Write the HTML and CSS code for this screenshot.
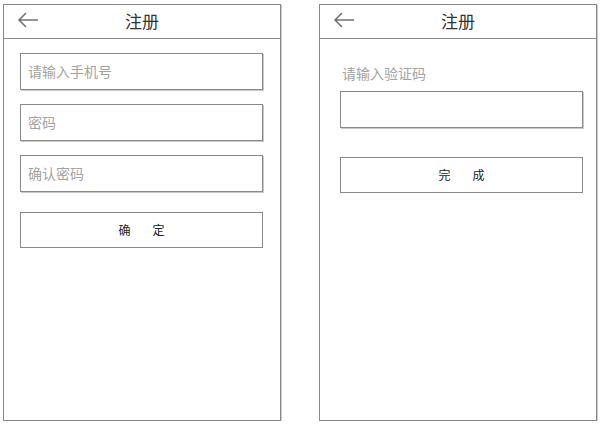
FILE: index.html
```html
<!DOCTYPE html>
<html lang="zh">
<head>
<meta charset="utf-8">
<title>注册</title>
<link rel="stylesheet" href="styles.css">
</head>
<body>
<div class="page">
  <section class="panel">
    <header class="bar">
      <svg class="back" width="22" height="16" viewBox="0 0 22 16"><path d="M21 8H2M9 1L2 8l7 7" fill="none" stroke="#707070" stroke-width="1.5"/></svg>
      <h1 class="title">注册</h1>
    </header>
    <div class="form">
      <div class="field">请输入手机号</div>
      <div class="field">密码</div>
      <div class="field">确认密码</div>
      <div class="btn"><span>确</span><span>定</span></div>
    </div>
  </section>
  <section class="panel">
    <header class="bar">
      <svg class="back" width="22" height="16" viewBox="0 0 22 16"><path d="M21 8H2M9 1L2 8l7 7" fill="none" stroke="#707070" stroke-width="1.5"/></svg>
      <h1 class="title">注册</h1>
    </header>
    <div class="form form-code">
      <div class="label">请输入验证码</div>
      <div class="field field-code"></div>
      <div class="btn btn-done"><span>完</span><span>成</span></div>
    </div>
  </section>
</div>
</body>
</html>
```
FILE: styles.css
```css
html, body {
  margin: 0;
  padding: 0;
  background: #fff;
  font-family: "Noto Sans CJK SC", "Noto Sans", sans-serif;
}
.page {
  display: flex;
  gap: 38px;
  padding: 4px 0 0 3px;
}
.panel {
  width: 278px;
  height: 417px;
  box-sizing: border-box;
  border: 1px solid #8a8a8a;
  box-shadow: 1px 1px 0 #c8c8c8;
}
.bar {
  height: 33px;
  border-bottom: 1px solid #8a8a8a;
  position: relative;
  display: flex;
  align-items: center;
  justify-content: center;
  padding-bottom: 2px;
  box-sizing: border-box;
  height: 34px;
}
.back {
  position: absolute;
  left: 13px;
  top: 7px;
}
.title {
  margin: 0;
  font-size: 17px;
  font-weight: normal;
  color: #333;
  line-height: 20px;
}
.form {
  display: flex;
  flex-direction: column;
  padding: 14px 0 0 16px;
}
.field {
  width: 243px;
  height: 37px;
  box-sizing: border-box;
  border: 1px solid #8a8a8a;
  box-shadow: 1px 1px 0 #c8c8c8;
  margin-bottom: 14px;
  padding-left: 7px;
  padding-bottom: 2px;
  display: flex;
  align-items: center;
  font-size: 14px;
  color: #a3a3a3;
}
.btn {
  width: 243px;
  height: 36px;
  box-sizing: border-box;
  border: 1px solid #8a8a8a;
  margin-top: 6px;
  padding-bottom: 2px;
  display: flex;
  align-items: center;
  justify-content: center;
  gap: 22px;
  font-size: 12px;
  color: #222;
}
.form-code {
  padding-top: 24px;
  padding-left: 20px;
}
.label {
  font-size: 14px;
  line-height: 20px;
  color: #a3a3a3;
  padding-left: 2px;
  margin-bottom: 8px;
}
.field-code {
  margin-bottom: 29px;
}
.btn-done {
  margin-top: 0;
}
```
